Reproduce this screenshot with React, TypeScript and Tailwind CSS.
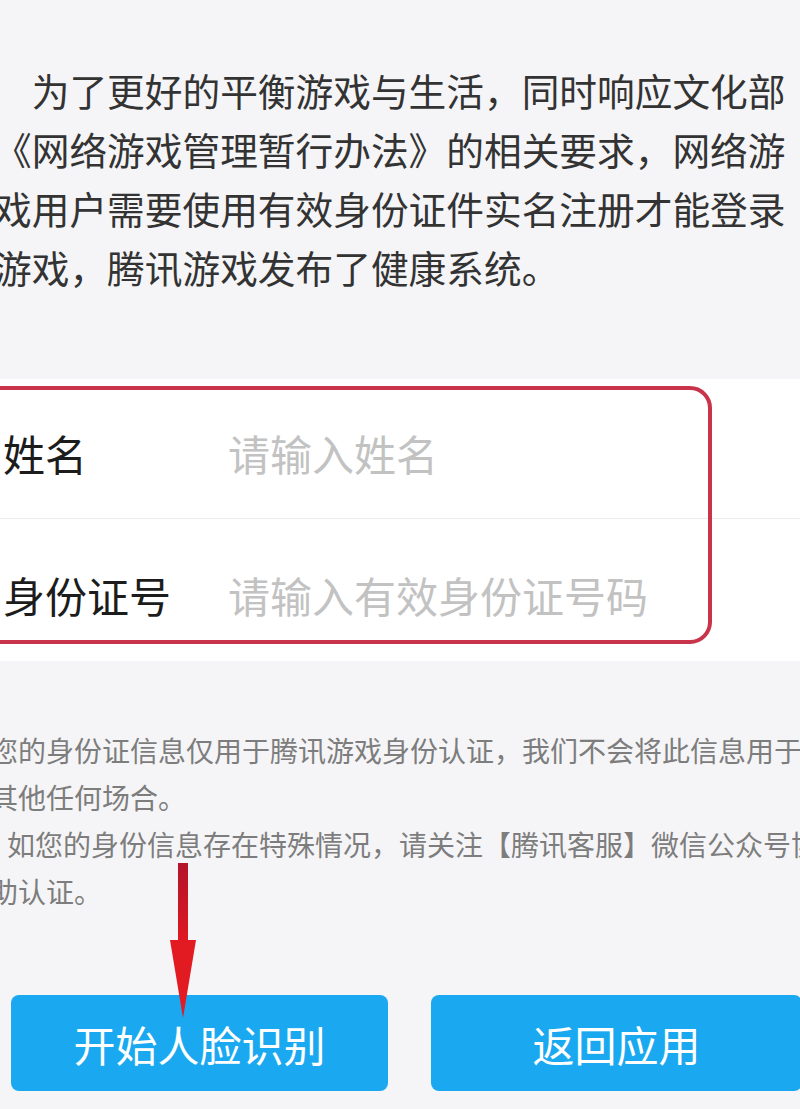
import React from "react";

const INTRO = [
  "为了更好的平衡游戏与生活，同时响应文化部",
  "《网络游戏管理暂行办法》的相关要求，网络游",
  "戏用户需要使用有效身份证件实名注册才能登录",
  "游戏，腾讯游戏发布了健康系统。",
];

const FIELDS = [
  { label: "姓名", placeholder: "请输入姓名", row: "h-[140px] border-b border-[#ececec]" },
  { label: "身份证号", placeholder: "请输入有效身份证号码", row: "h-[142px]" },
];

function DownArrow() {
  return (
    <svg className="absolute left-[168px] top-[860px] pointer-events-none" width="30" height="162" viewBox="0 0 30 162">
      <defs>
        <linearGradient id="shaft" x1="0" y1="0" x2="0" y2="1">
          <stop offset="0" stopColor="#b3142a" />
          <stop offset="1" stopColor="#e01822" />
        </linearGradient>
      </defs>
      <rect x="10" y="3" width="10" height="80" fill="url(#shaft)" />
      <polygon points="2,80 28,80 15,158" fill="#e21a22" />
    </svg>
  );
}

export default function App() {
  return (
    <div className="relative w-[800px] h-[1109px] overflow-hidden bg-[#f5f5f7] font-['Noto_Sans_CJK_SC','Noto_Sans',sans-serif]">
      {/* INTRO */}
      <div className="pt-[60px] ml-[-6px] text-[37.7px] leading-[59px] text-[#333333]">
        {INTRO.map((line, i) => (
          <div key={i} className={`whitespace-nowrap ${i === 0 ? "pl-[37.7px]" : ""}`}>{line}</div>
        ))}
      </div>

      {/* FORM */}
      <div className="relative mt-[83px] bg-white">
        {FIELDS.map((f) => (
          <div key={f.label} className={`flex items-center pl-[3px] pt-[8px] text-[42px] ${f.row}`}>
            <span className="w-[225px] whitespace-nowrap text-[#1c1c1c]">{f.label}</span>
            <span className="whitespace-nowrap text-[#c2c2c2]">{f.placeholder}</span>
          </div>
        ))}
        <div className="absolute left-[-20px] top-[7px] w-[732px] h-[258px] border-4 border-[#c8354b] rounded-[22px] pointer-events-none" />
      </div>

      {/* NOTES */}
      <div className="mt-[66px] ml-[-10px] text-[28px] leading-[47px] text-[#7d7d7d]">
        <div className="whitespace-nowrap">您的身份证信息仅用于腾讯游戏身份认证，我们不会将此信息用于</div>
        <div className="whitespace-nowrap">其他任何场合。</div>
        <div className="whitespace-nowrap pl-[17px]">如您的身份信息存在特殊情况，请关注【腾讯客服】微信公众号协</div>
        <div className="whitespace-nowrap">助认证。</div>
      </div>

      {/* ACTIONS */}
      <div className="mt-[80px] flex pl-[11px] gap-[43px]">
        <button className="w-[377px] h-[96px] shrink-0 rounded-[8px] bg-[#1aa9f0] text-white text-[42px]">开始人脸识别</button>
        <button className="w-[371px] h-[96px] shrink-0 rounded-[8px] bg-[#1aa9f0] text-white text-[42px]">返回应用</button>
      </div>

      <DownArrow />
    </div>
  );
}
